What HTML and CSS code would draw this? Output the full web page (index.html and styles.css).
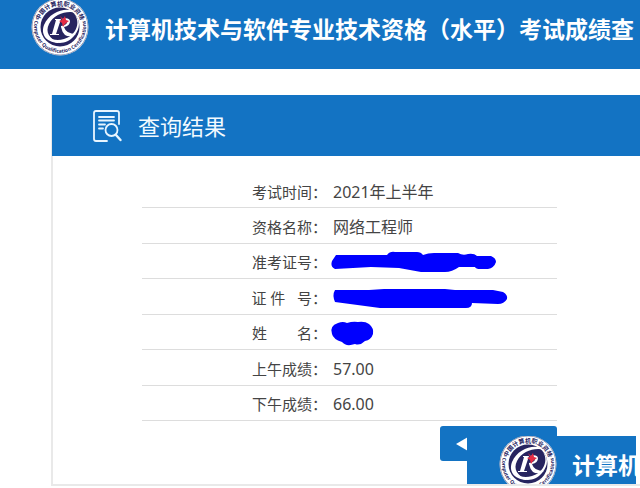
FILE: index.html
```html
<!DOCTYPE html>
<html lang="zh-CN">
<head>
<meta charset="UTF-8" />
<meta name="viewport" content="width=device-width, initial-scale=1" />
<title>考试成绩查询</title>
<link rel="stylesheet" href="styles.css">
</head>
<body>

<header class="top-bar">
  <svg class="logo" viewBox="0 0 58 58" role="img" aria-label="logo">
    <defs>
      <path id="ringTop" d="M7.500 29A21.500 21.500 0 0 1 50.500 29" />
      <path id="ringBottom" d="M4.500 20A26 26 0 1 0 53.500 20" />
      <g id="emblem">
        <circle cx="29" cy="29" r="28.500" fill="#fff" />
        <circle cx="29" cy="29" r="28" fill="none" stroke="#55628c" stroke-width="0.600" />
        <circle cx="29" cy="29" r="19.500" fill="#27245f" />
        <path d="M46 15C37 8 19 13 13 27C9 38 17 45 29 45C18 41 14 34 18 26C23 16 36 12 46 15Z" fill="#fff" />
        <path d="M44 17C50 26 44 38 33 41C27 43 21 42 17 39C22 47 36 47 43 38C50 30 49 22 44 17Z" fill="#fff" />
        <path d="M24 21H30L25 36H28V37H19V36H21L25 22H24Z" fill="#fff" />
        <path d="M31 21Q38 19 39 23Q39 28 33 29Q35 36 45 36Q39 40 34 37Q31 34 30 29V28Q36 27 36 24Q36 22 31 22Z" fill="#fff" />
        <path d="M29 18L32 21L34 18L35 22L38 23L34 26L32 29L31 25L28 23L31 22Z" fill="#e52b43" />
        <text class="emblem-cn"><textPath href="#ringTop" startOffset="50%">中国计算机职业资格</textPath></text>
        <text class="emblem-en"><textPath href="#ringBottom" startOffset="50%">· Computer Qualification Certifications ·</textPath></text>
      </g>
    </defs>
    <use href="#emblem" />
  </svg>
  <h1>计算机技术与软件专业技术资格（水平）考试成绩查</h1>
</header>

<main class="panel">
  <div class="panel-title">
    <svg class="title-icon" viewBox="0 0 30 32" fill="none" stroke="#e8f5ff" stroke-width="1.800" stroke-linecap="round" stroke-linejoin="round">
      <path d="M14 31H3Q1 31 1 29V3Q1 1 3 1H24Q26 1 26 3V14" />
      <path d="M6 7H21M6 10.500H21M6 14.500H12M6 18.500H10" />
      <circle cx="18.500" cy="20" r="6" />
      <path d="M23 25L27.500 30" stroke-width="2.400" />
    </svg>
    <h2>查询结果</h2>
  </div>

  <div class="result">
    <table class="result-table">
      <tr><th scope="row">考试时间：</th><td>2021年上半年</td></tr>
      <tr><th scope="row">资格名称：</th><td>网络工程师</td></tr>
      <tr>
        <th scope="row">准考证号：</th>
        <td>
          <svg class="mask" viewBox="0 0 180 24">
            <path d="M3 5H54Q57 1 62 2H84Q88 2 90 5Q95 3 101 3H125Q130 6 135 4Q141 3 144 6H158Q163 8 163 12Q161 18 155 19H147Q143 19 142 17H126Q119 22 112 22H88L66 18L38 17L2 19Q-3 17 -1 11Z" />
          </svg>
        </td>
      </tr>
      <tr>
        <th scope="row">证 件&nbsp;&nbsp;&nbsp;号：</th>
        <td>
          <svg class="mask" viewBox="0 0 180 24">
            <path d="M2 4L36 4L51 3H112L122 4H160L170 6Q175 9 174 13Q171 18 165 18L139 17Q139 22 133 22H47L2 16Q-1 9 2 4Z" />
          </svg>
        </td>
      </tr>
      <tr>
        <th scope="row">姓　　名：</th>
        <td>
          <svg class="mask" viewBox="0 0 180 24">
            <path d="M5 2Q10 0 14 2Q20 0 25 1Q32 0 36 3Q41 7 40 13Q38 19 32 20Q27 25 22 23Q13 26 9 21Q0 18 -1 13Q-4 5 5 2Z" />
          </svg>
        </td>
      </tr>
      <tr><th scope="row">上午成绩：</th><td>57.00</td></tr>
      <tr><th scope="row">下午成绩：</th><td>66.00</td></tr>
    </table>

    <button type="button" class="back-btn" aria-label="返回">
      <svg viewBox="0 0 12 14"><path d="M0 7L12 0V14Z" fill="#fff" /></svg>
    </button>
  </div>
</main>

<div class="corner-bar">
  <svg class="logo" viewBox="0 0 58 58"><use href="#emblem" /></svg>
  <span>计算机</span>
</div>

</body>
</html>
```

FILE: styles.css
```css
* {
  box-sizing: border-box;
}
body {
  margin: 0;
  background: #fff;
  color: #444;
  font-family: "Noto Sans", "Noto Sans CJK SC", sans-serif;
  overflow-x: hidden;
  position: relative;
}
h1, h2 {
  margin: 0;
}
.top-bar {
  display: flex;
  align-items: flex-start;
  gap: 16px;
  height: 69px;
  padding-left: 31px;
  background: #1373c3;
  color: #fff;
  overflow: hidden;
}
.logo {
  flex: none;
  width: 58px;
  height: 58px;
  margin-top: -2px;
}
.top-bar h1 {
  font-size: 23px;
  line-height: 32px;
  margin-top: 13px;
  white-space: nowrap;
}
.emblem-cn {
  font-size: 6px;
  font-weight: bold;
  fill: #27245f;
  text-anchor: middle;
}
.emblem-en {
  font-size: 5px;
  font-weight: bold;
  fill: #27245f;
  text-anchor: middle;
}

/* result panel */
.panel {
  margin: 26px 0 0 51px;
  border-left: 2px solid #e9e9e9;
  border-bottom: 2px solid #e9e9e9;
}
.panel-title {
  display: flex;
  align-items: center;
  gap: 15px;
  height: 61px;
  margin-left: -1px;
  padding-left: 41px;
  background: #1373c3;
  color: #f2faff;
}
.title-icon {
  width: 30px;
  height: 32px;
}
.panel-title h2 {
  font-size: 22px;
  line-height: 32px;
  font-weight: normal;
}
.result {
  max-width: 504px;
  padding: 17px 0 23px 89px;
}
.result-table {
  width: 100%;
  height: 248px;
  border-collapse: collapse;
}
.result-table tr {
  border-bottom: 1px solid #ddd;
}
.result-table th {
  width: 191px;
  padding: 3px 6px 0 0;
  font-size: 15px;
  line-height: 24px;
  font-weight: normal;
  text-align: right;
  white-space: nowrap;
}
.result-table td {
  padding: 3px 0 0;
  font-size: 16px;
  line-height: 24px;
}
.mask {
  display: block;
  width: 180px;
  height: 24px;
  overflow: visible;
  fill: #0000fe;
}
.back-btn {
  display: flex;
  align-items: center;
  width: 117px;
  height: 35px;
  margin: 5px 0 0 auto;
  padding: 0 0 0 16px;
  border: none;
  border-radius: 3px;
  background: #1373c3;
  cursor: pointer;
}
.back-btn svg {
  width: 12px;
  height: 14px;
}

/* floating bar over the bottom right corner */
.corner-bar {
  position: absolute;
  right: 4px;
  bottom: 2px;
  display: flex;
  align-items: flex-start;
  gap: 15px;
  width: 169px;
  height: 48px;
  padding-left: 32px;
  background: #1373c3;
  color: #fff;
  overflow: hidden;
}
.corner-bar .logo {
  margin-top: -1px;
}
.corner-bar span {
  font-size: 23px;
  line-height: 32px;
  margin-top: 13px;
  font-weight: bold;
  white-space: nowrap;
}
```
